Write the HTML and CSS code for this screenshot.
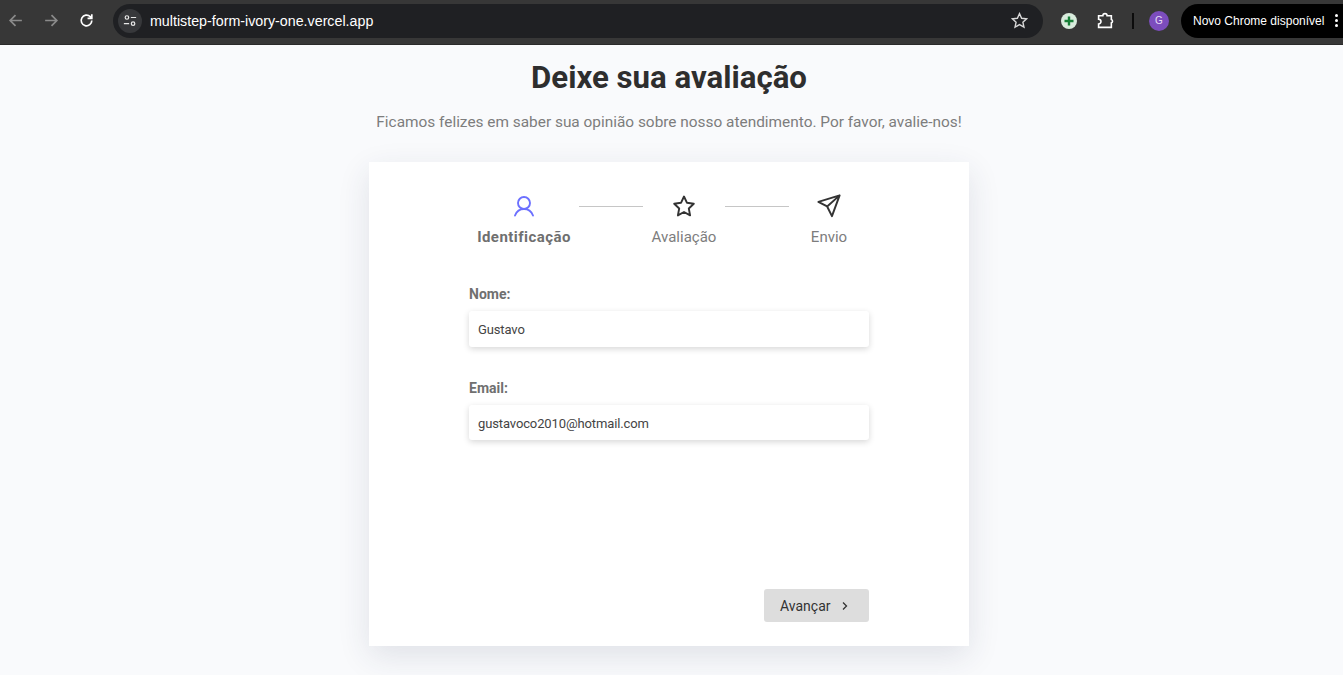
FILE: index.html
```html
<!DOCTYPE html>
<html lang="pt-BR">
<head>
<meta charset="utf-8">
<title>Deixe sua avaliação</title>
<link rel="stylesheet" href="styles.css">
</head>
<body>
<header class="chrome">
  <svg class="tool tool-back" viewBox="0 0 16 16"><path d="M14 8H3M8 3L3 8l5 5"/></svg>
  <svg class="tool tool-fwd" viewBox="0 0 16 16"><path d="M2 8h11M8 3l5 5-5 5"/></svg>
  <svg class="tool tool-reload" viewBox="0 0 16 16"><path d="M13 8a5 5 0 1 1-1.500-3.600L13 6M13 2v4H9"/></svg>
  <div class="omnibox">
    <span class="site-chip">
      <svg viewBox="0 0 16 16"><circle cx="4.500" cy="4" r="2"/><path d="M9 4h6M1 11h6"/><circle cx="11.500" cy="11" r="2"/></svg>
    </span>
    <span class="url">multistep-form-ivory-one.vercel.app</span>
    <svg class="bookmark" viewBox="0 0 16 16"><path d="M8 1.500l2 4.400 4.700.5-3.500 3.200 1 4.700L8 11.900l-4.200 2.400 1-4.700L1.300 6.400 6 5.900z"/></svg>
  </div>
  <span class="ext-green"><svg viewBox="0 0 16 16"><path d="M8 3.500v9M3.500 8h9"/></svg></span>
  <svg class="tool tool-ext" viewBox="0 0 16 16"><path d="M1.500 3.500h4a2 2 0 0 1 4 0h4v3.500a1.700 1.700 0 0 1 0 3.200v4.300H1.500v-3.200a2 2 0 0 0 0-4.500z"/></svg>
  <span class="divider"></span>
  <span class="avatar">G</span>
  <div class="update">
    <span class="update-text">Novo Chrome disponível</span>
    <span class="dots"><i></i><i></i><i></i></span>
  </div>
</header>

<main class="page">
  <h1 class="title">Deixe sua avaliação</h1>
  <p class="subtitle">Ficamos felizes em saber sua opinião sobre nosso atendimento. Por favor, avalie-nos!</p>

  <section class="card">
    <div class="steps">
      <div class="step step-one">
        <svg class="step-icon active" viewBox="0 0 24 24"><circle cx="12" cy="9" r="6"/><path d="M3 21.500c1.600-4.200 4.800-6.500 9-6.500s7.400 2.300 9 6.500"/></svg>
        <span class="step-label current">Identificação</span>
      </div>
      <span class="step-line line-one"></span>
      <div class="step step-two">
        <svg class="step-icon" viewBox="0 0 24 24"><path d="M12 2.500l3 6.300 6.800.9-5 4.800 1.300 6.900-6.100-3.400-6.100 3.400 1.300-6.900-5-4.800 6.800-.9z"/></svg>
        <span class="step-label">Avaliação</span>
      </div>
      <span class="step-line line-two"></span>
      <div class="step step-three">
        <svg class="step-icon plane" viewBox="0 0 26 26"><path d="M24.500 1.500L1.500 8.500l9.500 5 5.200 10.500zM24.500 1.500L11 13.500"/></svg>
        <span class="step-label">Envio</span>
      </div>
    </div>

    <form class="form">
      <div class="field">
        <label class="field-label" for="nome">Nome:</label>
        <input class="field-input" id="nome" type="text" value="Gustavo">
      </div>
      <div class="field">
        <label class="field-label" for="email">Email:</label>
        <input class="field-input field-input-short" id="email" type="text" value="gustavoco2010@hotmail.com">
      </div>
      <div class="actions">
        <button class="next" type="button">
          <span>Avançar</span>
          <svg viewBox="0 0 10 10"><path d="M3 1.500L6.500 5 3 8.500"/></svg>
        </button>
      </div>
    </form>
  </section>
</main>
</body>
</html>
```

FILE: styles.css
```css
* {
  box-sizing: border-box;
}

html,
body {
  margin: 0;
  height: 675px;
  overflow: hidden;
}

body {
  background: #f9fafc;
  font-family: Roboto, "Liberation Sans", sans-serif;
  color: #2e2e2e;
}

/* Browser bar */
.chrome {
  height: 45px;
  background: #373737;
  border-bottom: 1px solid #2a2a2a;
  display: flex;
  align-items: center;
  padding: 0 0 3px 7px;
}

.tool {
  width: 17px;
  height: 17px;
  fill: none;
  stroke: #fff;
  stroke-width: 1.6;
  flex: none;
}

.tool-back,
.tool-fwd {
  stroke: #8b8b8b;
}

.tool-fwd {
  margin-left: 19px;
}

.tool-reload {
  margin-left: 18px;
}

.omnibox {
  width: 930px;
  height: 34px;
  margin-left: 18px;
  border-radius: 17px;
  background: #1f2023;
  display: flex;
  align-items: center;
  padding: 0 16px 0 5px;
  flex: none;
}

.site-chip {
  width: 24px;
  height: 24px;
  border-radius: 50%;
  background: #37383b;
  display: flex;
  align-items: center;
  justify-content: center;
}

.site-chip svg {
  width: 14px;
  height: 14px;
  fill: none;
  stroke: #e8e8e8;
  stroke-width: 1.400;
}

.url {
  margin-left: 8px;
  font-family: "Liberation Sans", sans-serif;
  font-size: 14.250px;
  color: #fff;
  flex: 1;
}

.bookmark {
  width: 17px;
  height: 17px;
  margin-right: -1px;
  fill: none;
  stroke: #d8d8d8;
  stroke-width: 1.300;
}

.ext-green {
  width: 16px;
  height: 16px;
  margin-left: 18px;
  border-radius: 50%;
  background: #d9ecdd;
  display: flex;
  flex: none;
}

.ext-green svg {
  fill: none;
  stroke: #188038;
  stroke-width: 2.400;
}

.tool-ext {
  margin-left: 20px;
  stroke-width: 1.500;
}

.divider {
  width: 2px;
  height: 16px;
  margin-left: 18px;
  background: #0c0c0c;
  flex: none;
}

.avatar {
  width: 20px;
  height: 20px;
  margin-left: 15px;
  border-radius: 50%;
  background: #7c4dbd;
  color: #e6dcf5;
  font-family: "Liberation Sans", sans-serif;
  font-size: 10px;
  display: flex;
  align-items: center;
  justify-content: center;
  flex: none;
}

.update {
  width: 170px;
  height: 34px;
  margin-left: 12px;
  border-radius: 17px 0 0 17px;
  background: #000;
  color: #fff;
  display: flex;
  align-items: center;
  padding-left: 12px;
  flex: none;
}

.update-text {
  font-family: "Liberation Sans", sans-serif;
  font-size: 12px;
  white-space: nowrap;
}

.dots {
  display: flex;
  flex-direction: column;
  gap: 2px;
  margin-left: 11px;
}

.dots i {
  width: 3px;
  height: 3px;
  border-radius: 50%;
  background: #fff;
}

/* Page */
.page {
  display: flex;
  flex-direction: column;
  align-items: center;
  padding-right: 5px;
}

.title {
  margin: 14px 0 0;
  font-size: 31.200px;
  line-height: 38px;
  font-weight: 700;
  color: #2e2e2e;
}

.subtitle {
  margin: 15px 0 0;
  font-size: 15.400px;
  line-height: 20px;
  color: #7d7d7d;
}

.card {
  width: 600px;
  height: 484px;
  margin-top: 30px;
  padding: 32px 100px 24px;
  background: #fff;
  box-shadow: 0 10px 30px rgba(40, 50, 80, 0.12);
  display: flex;
  flex-direction: column;
}

/* Steps */
.steps {
  display: flex;
  align-items: flex-start;
  height: 52px;
  margin-left: 8px;
}

.step {
  display: flex;
  flex-direction: column;
  align-items: center;
  gap: 10px;
  flex: none;
}

.step-one {
  width: 94px;
}

.step-two {
  width: 66px;
  margin-left: 8px;
}

.step-three {
  width: 40px;
  margin-left: 20px;
}

.step-icon {
  width: 24px;
  height: 24px;
  fill: none;
  stroke: #333;
  stroke-width: 1.900;
  stroke-linejoin: round;
  stroke-linecap: round;
}

.step-icon.plane {
  stroke-width: 2.100;
}

.step-icon.active {
  stroke: #6c70ff;
}

.step-label {
  font-size: 15px;
  line-height: 18px;
  color: #7d7d7d;
  white-space: nowrap;
}

.step-label.current {
  font-weight: 700;
  color: #6f6f6f;
  letter-spacing: 0.450px;
}

.step-line {
  width: 64px;
  height: 1px;
  margin-top: 12px;
  background: #c6c6c6;
  flex: none;
}

.line-one {
  margin-left: 8px;
}

.line-two {
  margin-left: 8px;
}

/* Form */
.form {
  display: flex;
  flex-direction: column;
  flex: 1;
  margin-top: 40px;
}

.field {
  display: flex;
  flex-direction: column;
  gap: 8px;
  margin-bottom: 33px;
}

.field-label {
  font-size: 14px;
  line-height: 17px;
  font-weight: 700;
  color: #707070;
}

.field-input {
  width: 400px;
  height: 36px;
  border: 0;
  border-radius: 3px;
  padding: 0 9px;
  background: #fff;
  box-shadow: 0 2px 6px rgba(0, 0, 0, 0.16);
  font-family: inherit;
  font-size: 13px;
  letter-spacing: -0.120px;
  color: #444;
  outline: none;
}

.field-input-short {
  height: 35px;
  padding-top: 1px;
}

.actions {
  margin-top: auto;
  display: flex;
  justify-content: flex-end;
}

.next {
  width: 105px;
  height: 33px;
  border: 0;
  border-radius: 3px;
  background: #dddddd;
  color: #333;
  font-family: inherit;
  font-size: 14px;
  display: flex;
  align-items: center;
  padding: 0 0 0 16px;
}

.next svg {
  width: 10px;
  height: 10px;
  margin-left: 9px;
  fill: none;
  stroke: #333;
  stroke-width: 1.300;
}
```
